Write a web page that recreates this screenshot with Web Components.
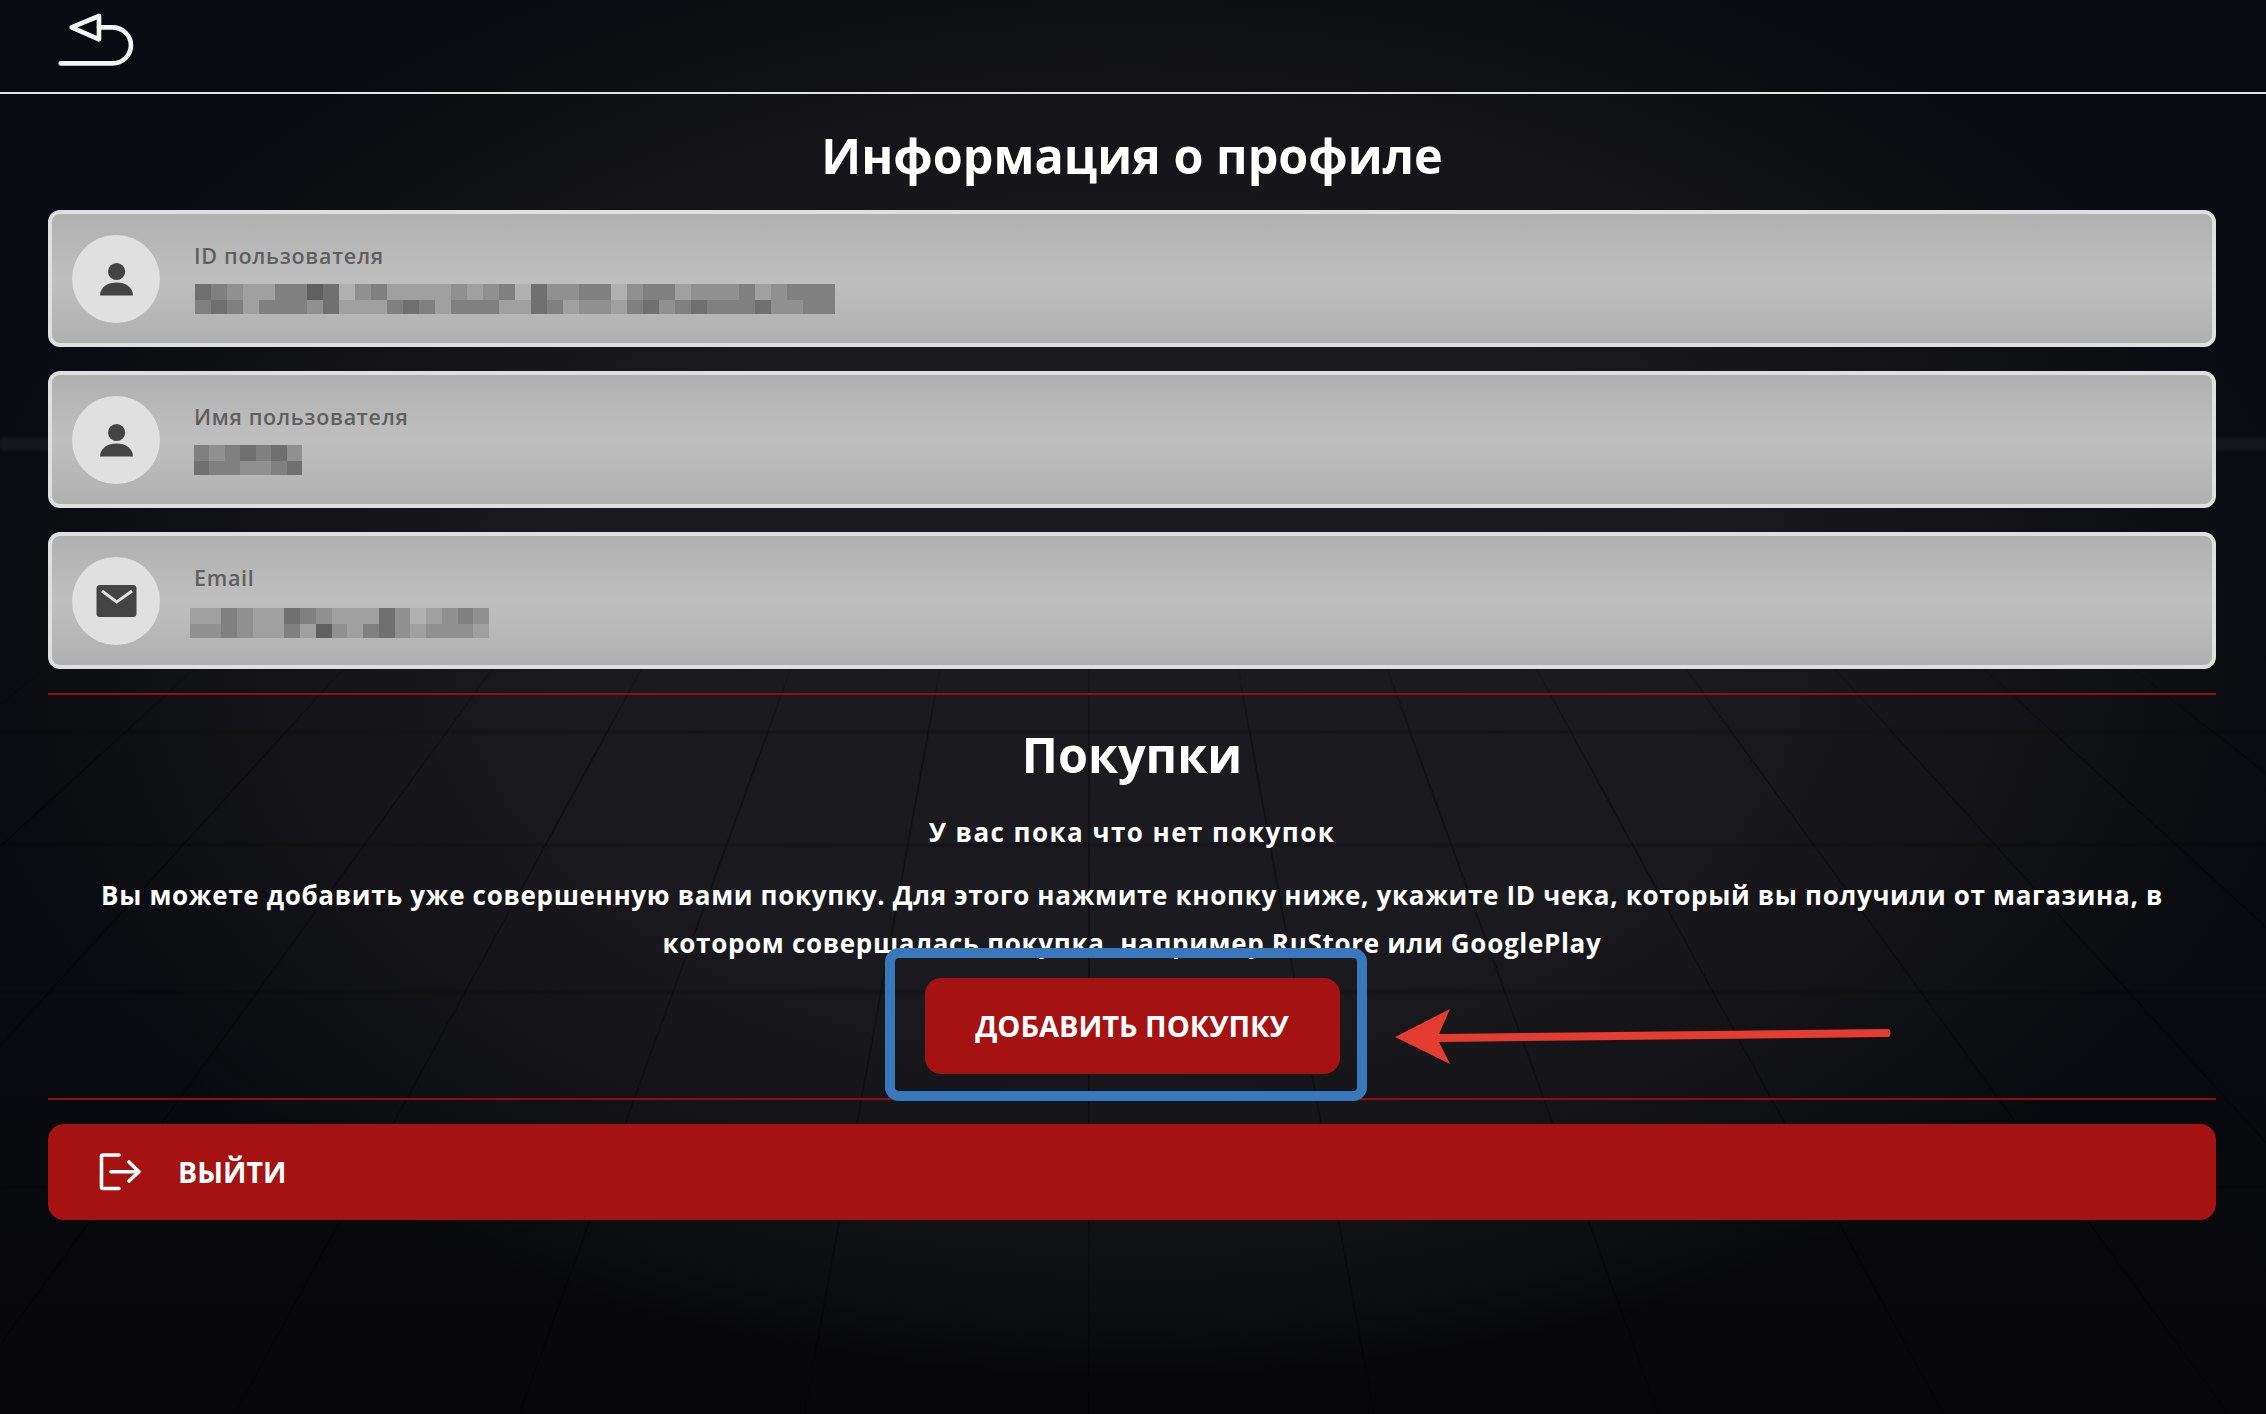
<!DOCTYPE html>
<html lang="ru">
<head>
<meta charset="utf-8">
<title>Профиль</title>
<style>
html, body { margin: 0; padding: 0; background: #08090d; }
body { font-family: "Open Sans", "Noto Sans", sans-serif; color: #fff; }
</style>
</head>
<body>
<app-shell>
  <top-bar slot="top"></top-bar>
  <section-title>Информация о профиле</section-title>
  <profile-card icon="person" label="ID пользователя" shift="1"
    top="7 8 9 a a 8 8 6 7 b 9 8 a a a a 9 a 9 8 b 7 9 9 8 8 b 9 8 8 a 9 9 9 8 a 9 8 8 8"
    bottom="8 7 8 a 8 8 8 9 7 a a a 8 7 8 a 8 8 8 a a 7 8 a 9 9 a 8 7 9 8 7 8 8 8 7 9 9 8 8"
    blur-width="640"></profile-card>
  <profile-card icon="person" label="Имя пользователя"
    top="8 9 8 7 8 7 9" bottom="7 8 8 9 9 8 7" blur-width="108"></profile-card>
  <profile-card icon="mail" label="Email" shift="-4" drop="2"
    top="a a 8 9 a a 7 8 9 a a a 7 9 b a 9 8 9"
    bottom="9 9 8 9 a a 8 a 6 9 a 8 7 9 a 9 9 9 a" blur-width="299"></profile-card>
  <red-divider></red-divider>
  <purchases-panel>
    <span slot="title">Покупки</span>
    <span slot="empty">У вас пока что нет покупок</span>
    Вы можете добавить уже совершенную вами покупку. Для этого нажмите кнопку ниже, укажите ID чека, который вы получили от магазина, в котором совершалась покупка, например RuStore или GooglePlay
  </purchases-panel>
  <red-divider></red-divider>
  <logout-bar>ВЫЙТИ</logout-bar>
</app-shell>

<script>
class AppShell extends HTMLElement {
    constructor() {
        super();
        this.attachShadow({ mode: 'open' });
        // floor lines of the backdrop, all running to one vanishing point
        let lines = '';
        for (let n = -8; n <= 8; n++) {
            const x1 = 1089 + 224 * n * (620 + 150) / 1230;
            const x2 = 1089 + 224 * n * (1414 + 150) / 1230;
            lines += `<line x1="${x1}" y1="620" x2="${x2}" y2="1414"/>`;
        }
        this.shadowRoot.innerHTML = `<style>
        :host { display: block; position: relative; width: 2266px; height: 1414px; overflow: hidden;
            background:
                radial-gradient(ellipse 1180px 740px at 1133px 640px, #1b1b20 0%, #1a1a1f 48%, #141418 72%, #0d0e12 90%, rgba(10,11,16,0) 100%),
                linear-gradient(#0a0b10 0%, #0a0b10 70%, #07070b 100%); }
        .floor { position: absolute; left: 0; top: 0; }
        .content { position: relative; display: flex; flex-direction: column; }
        .main { display: flex; flex-direction: column; padding: 0 50px 0 48px; }
        </style>
        <svg class="floor" width="2266" height="1414" viewBox="0 0 2266 1414">
            <defs>
                <linearGradient id="fade" x1="0" y1="620" x2="0" y2="760" gradientUnits="userSpaceOnUse">
                    <stop offset="0" stop-color="#000" stop-opacity="0"/>
                    <stop offset="1" stop-color="#000" stop-opacity=".32"/>
                </linearGradient>
                <filter id="soft"><feGaussianBlur stdDeviation="1.6"/></filter>
            </defs>
            <g stroke="url(#fade)" stroke-width="2" fill="none">${lines}</g>
            <g stroke="#000" stroke-opacity=".28" stroke-width="3" filter="url(#soft)">
                <line x1="0" y1="732" x2="2266" y2="732"/>
                <line x1="0" y1="845" x2="2266" y2="845"/>
                <line x1="0" y1="992" x2="2266" y2="992"/>
                <line x1="0" y1="1187" x2="2266" y2="1187"/>
            </g>
            <rect x="0" y="438" width="2266" height="12" fill="#24242a" opacity=".55" filter="url(#soft)"/>
        </svg>
        <div class="content">
            <slot name="top"></slot>
            <div class="main"><slot></slot></div>
        </div>`;
    }
}

class TopBar extends HTMLElement {
    constructor() {
        super();
        this.attachShadow({ mode: 'open' });
        this.shadowRoot.innerHTML = `<style>
        :host { display: block; height: 92px; border-bottom: 2px solid #e4e4e4; padding-left: 40px; }
        svg { display: block; }
        </style>
        <svg width="120" height="80" viewBox="0 0 360 240" fill="none" stroke="#f4f4f4" stroke-width="14" stroke-linejoin="round" stroke-linecap="round">
            <path d="M95 82 L177 48 L177 118 Z"/>
            <path d="M177 82 H217 A 56 54 0 0 1 217 190 H62"/>
        </svg>`;
    }
}

class SectionTitle extends HTMLElement {
    constructor() {
        super();
        this.attachShadow({ mode: 'open' });
        this.shadowRoot.innerHTML = `<style>
        :host { display: block; height: 116px; line-height: 122px; text-align: center;
            font-size: 48.5px; font-weight: 700; letter-spacing: 0; color: #fff; }
        </style><slot></slot>`;
    }
}

const ICONS = {
    person: `<circle cx="44.6" cy="36.5" r="8.6" fill="#444"/>
        <path d="M28 60.5 C28 52 36 47.5 44.6 47.5 C53 47.5 61 52 61 60.5 Z" fill="#444"/>`,
    mail: `<rect x="24.5" y="28" width="40" height="32" rx="3.5" fill="#444"/>
        <path d="M30 34 L44.7 45 L60 34" fill="none" stroke="#e0e0e0" stroke-width="3"/>`
};

class ProfileCard extends HTMLElement {
    constructor() {
        super();
        this.attachShadow({ mode: 'open' });
        this.shadowRoot.innerHTML = `<style>
        :host { display: flex; align-items: center; box-sizing: border-box; height: 137px; margin-bottom: 24px;
            border: 4px solid #dfdfdf; border-radius: 12px; padding-left: 20px;
            background: linear-gradient(#b0b0b0 0%, #bfbfbf 50%, #b0b0b0 100%); }
        :host(:last-of-type) { margin-bottom: 0; }
        .avatar { flex: none; width: 88px; height: 88px; border-radius: 50%; background: #e0e0e0; }
        .avatar svg { display: block; }
        .text { margin-left: 34px; display: flex; flex-direction: column; height: 71px; }
        .label { font-size: 21.5px; line-height: 26px; font-weight: 600; letter-spacing: .7px; color: #5f5f5f; }
        .blur { display: grid; margin-top: 15px; height: 30px; grid-template-rows: 16px 14px; }
        .blur i { display: block; }
        </style>
        <div class="avatar"><svg width="88" height="88" viewBox="0 0 88 88"></svg></div>
        <div class="text"><div class="label"></div><div class="blur"></div></div>`;
    }
    connectedCallback() {
        this.render();
    }
    render() {
        const root = this.shadowRoot;
        root.querySelector('svg').innerHTML = ICONS[this.getAttribute('icon')] || '';
        root.querySelector('.label').textContent = this.getAttribute('label');
        // the value is hidden in the screenshot: a grid of mosaic cells stands for it
        const top = this.getAttribute('top').split(' ');
        const bottom = this.getAttribute('bottom').split(' ');
        const blur = root.querySelector('.blur');
        blur.style.width = this.getAttribute('blur-width') + 'px';
        blur.style.gridTemplateColumns = `repeat(${top.length}, 1fr)`;
        blur.style.marginLeft = (this.getAttribute('shift') || 0) + 'px';
        blur.style.marginTop = 15 + Number(this.getAttribute('drop') || 0) + 'px';
        for (const v of top.concat(bottom)) {
            const cell = document.createElement('i');
            cell.style.background = '#' + v + '0' + v + '0' + v + '0';
            blur.appendChild(cell);
        }
    }
}

class RedDivider extends HTMLElement {
    constructor() {
        super();
        this.attachShadow({ mode: 'open' });
        this.shadowRoot.innerHTML = `<style>
        :host { display: block; height: 2px; margin-top: 24px; background: #8f1014; }
        </style>`;
    }
}

class PurchasesPanel extends HTMLElement {
    constructor() {
        super();
        this.attachShadow({ mode: 'open' });
        this.shadowRoot.innerHTML = `<style>
        :host { display: block; text-align: center; color: #fff; }
        h2 { margin: 0; height: 88px; padding-top: 15px; box-sizing: content-box; line-height: 88px;
            font-size: 48.5px; font-weight: 700; letter-spacing: 0; }
        .empty { margin-top: 10px; height: 48px; line-height: 48px; font-size: 26px; font-weight: 700; letter-spacing: 1.45px; }
        .note { margin: 15px 0 0; line-height: 48px; font-size: 26px; font-weight: 700; letter-spacing: .68px; }
        add-purchase { margin-top: 11px; }
        </style>
        <h2><slot name="title"></slot></h2>
        <div class="empty"><slot name="empty"></slot></div>
        <p class="note"><slot></slot></p>
        <add-purchase>ДОБАВИТЬ ПОКУПКУ</add-purchase>`;
    }
}

class AddPurchase extends HTMLElement {
    constructor() {
        super();
        this.attachShadow({ mode: 'open' });
        this.shadowRoot.innerHTML = `<style>
        :host { display: block; position: relative; height: 96px; }
        .btn { box-sizing: border-box; width: 415px; height: 96px; margin: 0 auto; border-radius: 16px;
            background: #a51212; line-height: 96px; text-align: center;
            font-size: 29px; font-weight: 700; letter-spacing: 0; color: #fff; }
        /* the blue frame and the red arrow are marks drawn over the screenshot */
        .frame { position: absolute; left: 837px; top: -30px; width: 482px; height: 153px; box-sizing: border-box;
            border: 10px solid #3a78bd; border-radius: 14px; }
        .arrow { position: absolute; left: 1345px; top: 25px; }
        </style>
        <div class="btn"><slot></slot></div>
        <div class="frame"></div>
        <svg class="arrow" width="510" height="70" viewBox="0 0 510 70">
            <path d="M2 34 L57 6 L46 31 L496 26 Q499 30 496 34 L46 39 L57 61 Z" fill="#e53c32"/>
        </svg>`;
    }
}

class LogoutBar extends HTMLElement {
    constructor() {
        super();
        this.attachShadow({ mode: 'open' });
        this.shadowRoot.innerHTML = `<style>
        :host { display: flex; align-items: center; height: 96px; margin-top: 24px; padding-left: 50px;
            border-radius: 16px; background: #a51212; color: #fff;
            font-size: 28.5px; font-weight: 700; letter-spacing: 0; }
        svg { flex: none; margin-right: 36px; }
        </style>
        <svg width="44" height="44" viewBox="0 0 44 44" fill="none" stroke="#fff" stroke-width="3.6" stroke-linejoin="round" stroke-linecap="round">
            <path d="M21 5 H5 Q3.5 5 3.5 6.5 V37 Q3.5 38.5 5 38.5 H21"/>
            <path d="M13 21.7 H40"/>
            <path d="M31 12 L41 21.7 L31 31"/>
        </svg>
        <slot></slot>`;
    }
}

customElements.define('app-shell', AppShell);
customElements.define('top-bar', TopBar);
customElements.define('section-title', SectionTitle);
customElements.define('profile-card', ProfileCard);
customElements.define('red-divider', RedDivider);
customElements.define('add-purchase', AddPurchase);
customElements.define('purchases-panel', PurchasesPanel);
customElements.define('logout-bar', LogoutBar);
</script>
</body>
</html>
